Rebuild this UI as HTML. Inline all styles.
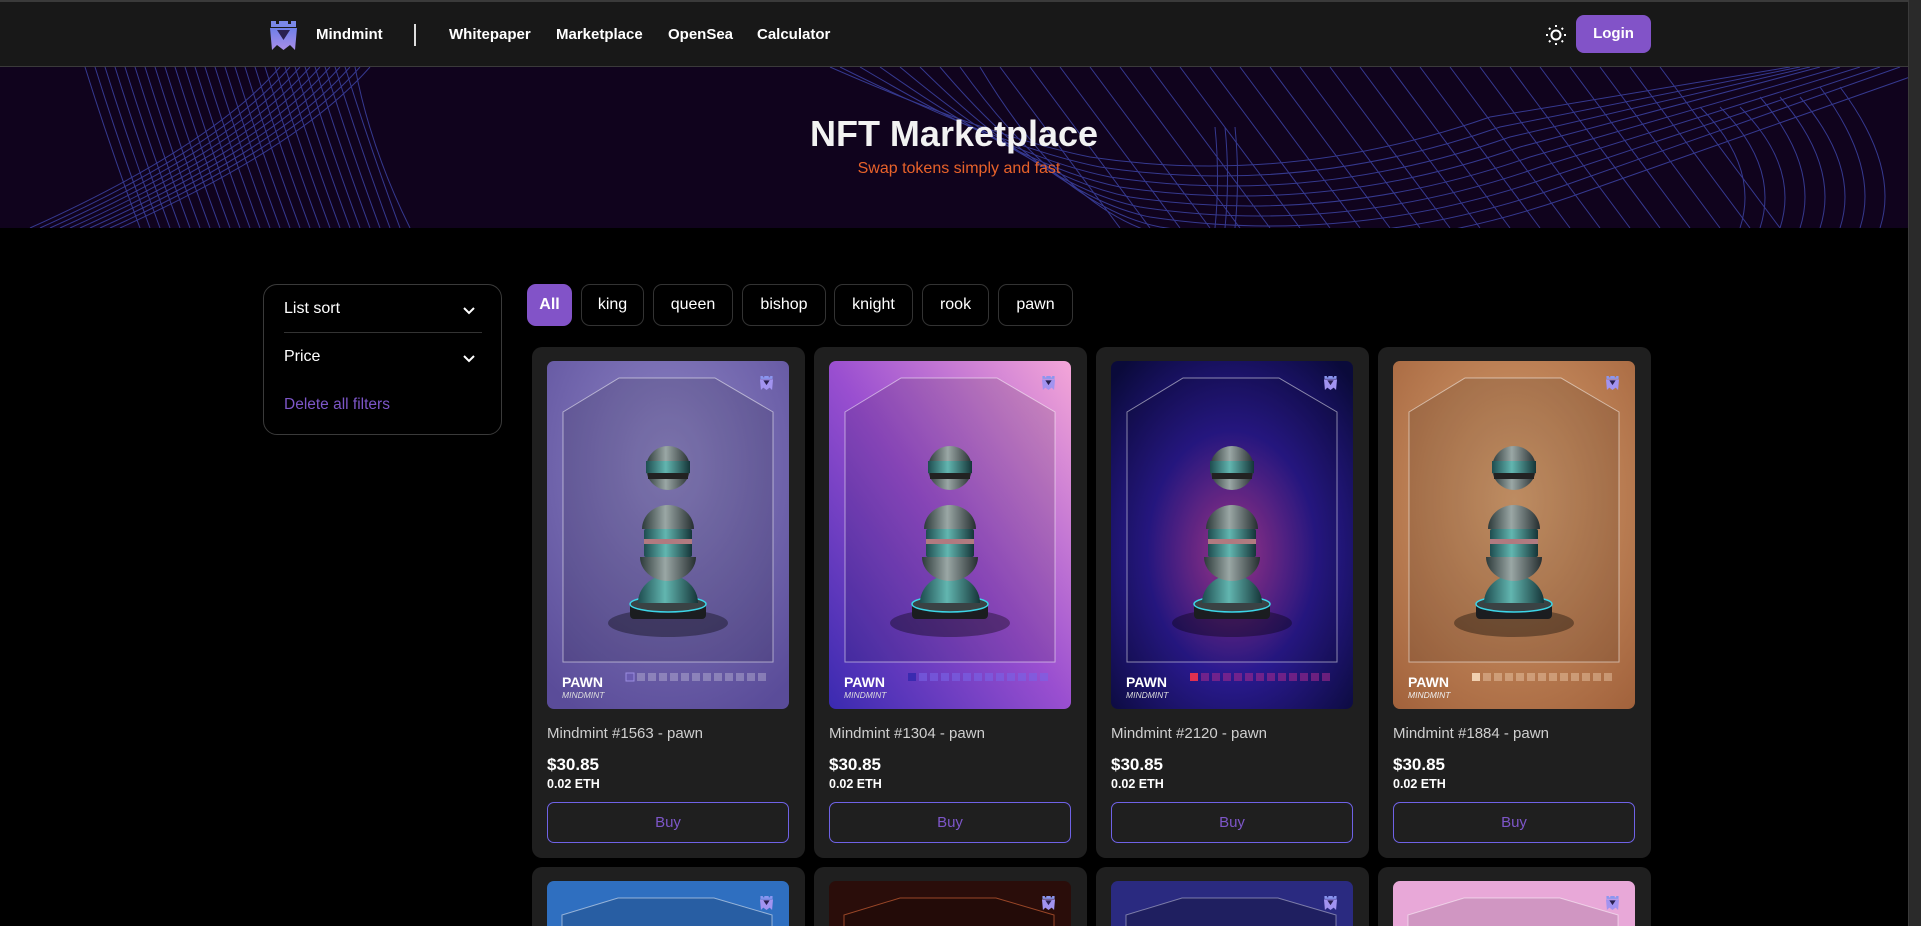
<!DOCTYPE html>
<html><head><meta charset="utf-8">
<style>
*{box-sizing:border-box;margin:0;padding:0}
html,body{width:1921px;height:926px;max-height:926px;overflow:hidden;background:#000;font-family:"Liberation Sans",sans-serif;color:#fff;position:relative}
.hdr{position:absolute;left:0;top:0;width:1908px;height:67px;background:#181818;border-top:2px solid #3a3a3a;border-bottom:1px solid #3a3a3a}
.hdr span{position:absolute;top:24px;font-size:15px;font-weight:bold;color:#fff}
.sb{position:absolute;right:0;top:0;width:13px;height:926px;background:#2a2a2a;border-left:1px solid #3a3a3a}
.hero{position:absolute;left:0;top:67px;width:1908px;height:161px;background:#10031d;overflow:hidden}
.side{position:absolute;left:263px;top:284px;width:239px;height:151px;border:1px solid #3a3a3a;border-radius:14px}
.side div{position:absolute;left:20px;font-size:16px}
.tab{position:absolute;top:284px;height:42px;border:1px solid #333;border-radius:9px;font-size:16px;text-align:center;line-height:40px;color:#fff;background:#000}
.card{position:absolute;width:273px;height:511px;background:#1f1f1f;border-radius:10px;overflow:hidden}
.card.s{height:59px;border-radius:10px 10px 0 0}
.card svg{position:absolute;left:15px;top:14px;border-radius:7px}
.nm{position:absolute;left:15px;top:378px;font-size:15px;color:#cfcfcf}
.pr{position:absolute;left:15px;top:408px;font-size:17px;font-weight:bold}
.eth{position:absolute;left:15px;top:430px;font-size:12.5px;font-weight:bold}
.buy{position:absolute;left:15px;top:455px;width:242px;height:41px;border:1px solid #6f62e6;border-radius:7px;text-align:center;line-height:39px;color:#7d56c8;font-size:15px}
</style></head><body>
<div class="hdr">
<svg style="position:absolute;left:268px;top:17px" width="31" height="31" viewBox="0 0 31 31"><defs><linearGradient id="lg" x1="0" y1="0" x2="0" y2="1"><stop offset="0" stop-color="#6f7fe8"/><stop offset="1" stop-color="#a98ee8"/></linearGradient></defs><path d="M3 2h5v3h3V2h9v3h3V2h5v6H3z" fill="#7a88e8"/><path d="M2 9h27l-2 22-5-5-6.5 5-6.5-5-5 5z" fill="url(#lg)"/><path d="M9 11h13l-6.5 10z" fill="#2a2050"/></svg>
<span style="left:316px">Mindmint</span>
<div style="position:absolute;left:414px;top:22px;width:2px;height:22px;background:#ddd"></div>
<span style="left:449px">Whitepaper</span>
<span style="left:556px">Marketplace</span>
<span style="left:668px">OpenSea</span>
<span style="left:757px">Calculator</span>
<svg style="position:absolute;left:1545px;top:22px" width="22" height="22" viewBox="0 0 22 22" fill="none" stroke="#fff" stroke-width="2"><circle cx="11" cy="11" r="4.5"/><path d="M11 1v2M11 19v2M1 11h2M19 11h2M4 4l1.4 1.4M16.6 16.6L18 18M4 18l1.4-1.4M16.6 5.4L18 4"/></svg>
<div style="position:absolute;left:1576px;top:13px;width:75px;height:38px;background:#8253c8;border-radius:8px;text-align:center;line-height:38px;font-weight:bold;font-size:15px">Login</div>
</div>
<div class="hero">
<svg width="1908" height="161" style="position:absolute;left:0;top:0" fill="none" stroke="#3a3f9c" stroke-width="1" opacity=".9">
<g>
<path d="M85 0 Q110 80 140 161M95 0 Q120 80 150 161M105 0 Q130 80 160 161M115 0 Q140 80 170 161M125 0 Q150 80 180 161M135 0 Q160 80 190 161M145 0 Q170 80 200 161M155 0 Q180 80 210 161M165 0 Q190 80 220 161M175 0 Q200 80 230 161M185 0 Q210 80 240 161M195 0 Q220 80 250 161M205 0 Q230 80 260 161M215 0 Q240 80 270 161M225 0 Q250 80 280 161M235 0 Q260 80 290 161M245 0 Q270 80 300 161M255 0 Q280 80 310 161M265 0 Q290 80 320 161M275 0 Q300 80 330 161M285 0 Q310 80 340 161M295 0 Q320 80 350 161M305 0 Q330 80 360 161M315 0 Q340 80 370 161M325 0 Q350 80 380 161M335 0 Q360 80 390 161M345 0 Q370 80 400 161M355 0 Q370 80 410 161"/>
<path d="M370 0 Q300 80 120 161M360 0 Q290 80 110 161M350 0 Q280 80 100 161M340 0 Q270 80 90 161M330 0 Q260 80 80 161M320 0 Q250 80 70 161M310 0 Q240 80 60 161M300 0 Q230 80 50 161M290 0 Q220 80 40 161M280 0 Q210 80 30 161"/>
<path d="M840 0 Q1000 80 1100 100 Q1300 130 1500 60 L1800 0"/>
<path d="M860 0 Q1010 90 1110 110 Q1310 140 1510 70 L1810 0"/>
<path d="M880 0 Q1020 100 1120 120 Q1320 150 1520 80 L1820 0"/>
<path d="M900 0 Q1030 110 1130 130 Q1330 160 1530 90 L1840 0"/>
<path d="M920 0 Q1040 120 1140 140 Q1340 170 1540 100 L1860 0"/>
<path d="M940 0 Q1050 130 1150 150 Q1350 180 1550 110 L1880 0"/>
<path d="M960 0 Q1060 140 1160 160 Q1360 190 1560 120 L1900 0"/>
<path d="M980 0 Q1070 150 1170 170 Q1370 200 1570 130 L1910 10"/>
<path d="M830 0 Q990 70 1090 90 Q1290 120 1490 50 L1790 0"/>
<path d="M1000 0 L1120 161M1030 0 L1150 161M1060 0 L1180 161M1090 0 L1210 161M1120 0 L1240 161M1150 0 L1270 161M1180 0 L1300 161M1210 0 L1330 161M1240 0 L1360 161M1270 0 L1390 161M1300 0 L1420 161M1330 0 L1450 161M1360 0 L1480 161M1390 0 L1510 161M1420 0 L1540 161M1450 0 L1570 161M1480 0 L1600 161M1510 0 L1630 161M1540 0 L1660 161M1570 0 L1690 161M1600 0 L1720 161M1630 0 L1750 161M1660 0 L1780 161"/>
<path d="M1215 60 Q1220 110 1215 161M1225 60 Q1230 110 1225 161M1235 60 Q1240 110 1235 161M1700 40 Q1760 100 1740 161M1720 40 Q1780 100 1760 161M1740 40 Q1800 100 1780 161M1760 30 Q1820 100 1800 161M1780 30 Q1840 100 1820 161M1800 30 Q1860 100 1840 161M1820 20 Q1880 100 1860 161M1840 20 Q1900 100 1880 161"/>
</g></svg>
<div style="position:absolute;left:0;width:1908px;top:46px;text-align:center;font-size:36px;font-weight:bold;color:#f2f2f2">NFT Marketplace</div>
<div style="position:absolute;left:0;width:1918px;top:93px;text-align:center;font-size:16px;color:#e8622a">Swap tokens simply and fast</div>
</div>
<div class="sb"></div>
<div class="side">
<div style="top:15px">List sort</div>
<svg style="position:absolute;left:198px;top:21px" width="14" height="10" viewBox="0 0 14 10" fill="none" stroke="#fff" stroke-width="2"><path d="M2 2l5 5 5-5"/></svg>
<div style="top:47px;width:198px;height:1px;background:#333"></div>
<div style="top:63px">Price</div>
<svg style="position:absolute;left:198px;top:69px" width="14" height="10" viewBox="0 0 14 10" fill="none" stroke="#fff" stroke-width="2"><path d="M2 2l5 5 5-5"/></svg>
<div style="top:111px;color:#7d56c8;font-size:15.5px">Delete all filters</div>
</div>
<div class="tab" style="left:527px;width:45px;background:#8253c8;border-color:#8253c8;font-weight:bold">All</div>
<div class="tab" style="left:581px;width:63px">king</div>
<div class="tab" style="left:653px;width:80px">queen</div>
<div class="tab" style="left:742px;width:84px">bishop</div>
<div class="tab" style="left:834px;width:79px">knight</div>
<div class="tab" style="left:922px;width:67px">rook</div>
<div class="tab" style="left:998px;width:75px">pawn</div>

<svg width="0" height="0" style="position:absolute">
<defs>
<linearGradient id="met" x1="0" y1="0" x2="1" y2="0"><stop offset="0" stop-color="#2d3a3a"/><stop offset=".45" stop-color="#9aa7a5"/><stop offset="1" stop-color="#262e30"/></linearGradient>
<linearGradient id="teal" x1="0" y1="0" x2="1" y2="0"><stop offset="0" stop-color="#1e4d50"/><stop offset=".45" stop-color="#62b6b0"/><stop offset="1" stop-color="#153538"/></linearGradient>
<symbol id="pawn" viewBox="0 0 240 348">
<polygon points="15,301 15,51 71,17 167,17 225,51 225,301" fill="rgba(0,0,0,.12)" stroke="rgba(255,255,255,.5)" stroke-width="1"/>
<ellipse cx="120" cy="262" rx="60" ry="14" fill="rgba(0,0,0,.35)"/>
<rect x="82" y="242" width="76" height="16" rx="4" fill="#1b1d20"/>
<ellipse cx="120" cy="243" rx="38" ry="8" fill="#3a4244" stroke="#3cd6e8" stroke-width="1.5"/>
<path d="M90 242 A30 28 0 0 1 150 242 Z" fill="url(#teal)"/>
<path d="M92 196 L148 196 A28 24 0 0 1 92 196 Z" fill="url(#met)"/>
<rect x="96" y="168" width="48" height="28" rx="2" fill="url(#teal)"/>
<rect x="96" y="178" width="48" height="5" fill="#b07a80"/>
<path d="M94 168 A26 24 0 0 1 146 168 Z" fill="url(#met)"/>
<circle cx="120" cy="107" r="22" fill="url(#met)"/>
<rect x="98" y="100" width="44" height="12" fill="url(#teal)"/>
<rect x="100" y="112" width="40" height="6" fill="#222"/>
</symbol>
<symbol id="logo" viewBox="0 0 31 31"><path d="M3 2h5v3h3V2h9v3h3V2h5v6H3z" fill="#8b96f0"/><path d="M2 9h27l-2 22-5-5-6.5 5-6.5-5-5 5z" fill="#a293f0"/><path d="M9 11h13l-6.5 10z" fill="#2a2050"/></symbol>
</defs></svg>

<div class="card" style="left:532px;top:347px">
<svg width="242" height="348" viewBox="0 0 242 348"><defs><radialGradient id="b1" cx=".5" cy=".3" r=".8"><stop offset="0" stop-color="#8d84c4"/><stop offset="1" stop-color="#5a4c99"/></radialGradient></defs><rect width="242" height="348" fill="url(#b1)"/><use href="#pawn" width="242" height="348"/><use href="#logo" x="212" y="14" width="15" height="15"/><text x="15" y="326" font-size="14" font-weight="bold" fill="#fff" font-family="Liberation Sans">PAWN</text><text x="15" y="337" font-size="8.5" font-style="italic" fill="#ddd" font-family="Liberation Sans">MINDMINT</text><g fill="rgba(255,255,255,.25)"><rect x="79" y="312" width="8" height="8" fill="#6a5bb0" stroke="#9a8ce0"/><rect x="90" y="312" width="8" height="8"/><rect x="101" y="312" width="8" height="8"/><rect x="112" y="312" width="8" height="8"/><rect x="123" y="312" width="8" height="8"/><rect x="134" y="312" width="8" height="8"/><rect x="145" y="312" width="8" height="8"/><rect x="156" y="312" width="8" height="8"/><rect x="167" y="312" width="8" height="8"/><rect x="178" y="312" width="8" height="8"/><rect x="189" y="312" width="8" height="8"/><rect x="200" y="312" width="8" height="8"/><rect x="211" y="312" width="8" height="8"/></g></svg>
<div class="nm">Mindmint #1563 - pawn</div><div class="pr">$30.85</div><div class="eth">0.02 ETH</div><div class="buy">Buy</div></div>

<div class="card" style="left:814px;top:347px">
<svg width="242" height="348" viewBox="0 0 242 348"><defs><linearGradient id="b2" x1="1" y1="0" x2="0" y2="1"><stop offset="0" stop-color="#f4a6d8"/><stop offset=".5" stop-color="#9a4fd0"/><stop offset="1" stop-color="#3a2ab0"/></linearGradient></defs><rect width="242" height="348" fill="url(#b2)"/><use href="#pawn" width="242" height="348"/><use href="#logo" x="212" y="14" width="15" height="15"/><text x="15" y="326" font-size="14" font-weight="bold" fill="#fff" font-family="Liberation Sans">PAWN</text><text x="15" y="337" font-size="8.5" font-style="italic" fill="#ddd" font-family="Liberation Sans">MINDMINT</text><g fill="rgba(120,100,230,.6)"><rect x="79" y="312" width="8" height="8" fill="#3a2ab0"/><rect x="90" y="312" width="8" height="8"/><rect x="101" y="312" width="8" height="8"/><rect x="112" y="312" width="8" height="8"/><rect x="123" y="312" width="8" height="8"/><rect x="134" y="312" width="8" height="8"/><rect x="145" y="312" width="8" height="8"/><rect x="156" y="312" width="8" height="8"/><rect x="167" y="312" width="8" height="8"/><rect x="178" y="312" width="8" height="8"/><rect x="189" y="312" width="8" height="8"/><rect x="200" y="312" width="8" height="8"/><rect x="211" y="312" width="8" height="8"/></g></svg>
<div class="nm">Mindmint #1304 - pawn</div><div class="pr">$30.85</div><div class="eth">0.02 ETH</div><div class="buy">Buy</div></div>

<div class="card" style="left:1096px;top:347px">
<svg width="242" height="348" viewBox="0 0 242 348"><defs><radialGradient id="b3" cx=".5" cy=".55" r=".7"><stop offset="0" stop-color="#b03a9a"/><stop offset=".5" stop-color="#2a1a90"/><stop offset="1" stop-color="#0a0a3a"/></radialGradient></defs><rect width="242" height="348" fill="url(#b3)"/><use href="#pawn" width="242" height="348"/><use href="#logo" x="212" y="14" width="15" height="15"/><text x="15" y="326" font-size="14" font-weight="bold" fill="#fff" font-family="Liberation Sans">PAWN</text><text x="15" y="337" font-size="8.5" font-style="italic" fill="#ddd" font-family="Liberation Sans">MINDMINT</text><g fill="rgba(160,40,140,.6)"><rect x="79" y="312" width="8" height="8" fill="#e03050"/><rect x="90" y="312" width="8" height="8"/><rect x="101" y="312" width="8" height="8"/><rect x="112" y="312" width="8" height="8"/><rect x="123" y="312" width="8" height="8"/><rect x="134" y="312" width="8" height="8"/><rect x="145" y="312" width="8" height="8"/><rect x="156" y="312" width="8" height="8"/><rect x="167" y="312" width="8" height="8"/><rect x="178" y="312" width="8" height="8"/><rect x="189" y="312" width="8" height="8"/><rect x="200" y="312" width="8" height="8"/><rect x="211" y="312" width="8" height="8"/></g></svg>
<div class="nm">Mindmint #2120 - pawn</div><div class="pr">$30.85</div><div class="eth">0.02 ETH</div><div class="buy">Buy</div></div>

<div class="card" style="left:1378px;top:347px">
<svg width="242" height="348" viewBox="0 0 242 348"><defs><radialGradient id="b4" cx=".5" cy=".4" r=".8"><stop offset="0" stop-color="#d8a070"/><stop offset="1" stop-color="#a0603a"/></radialGradient></defs><rect width="242" height="348" fill="url(#b4)"/><use href="#pawn" width="242" height="348"/><use href="#logo" x="212" y="14" width="15" height="15"/><text x="15" y="326" font-size="14" font-weight="bold" fill="#fff" font-family="Liberation Sans">PAWN</text><text x="15" y="337" font-size="8.5" font-style="italic" fill="#eee" font-family="Liberation Sans">MINDMINT</text><g fill="rgba(255,230,200,.35)"><rect x="79" y="312" width="8" height="8" fill="#f0d0b0"/><rect x="90" y="312" width="8" height="8"/><rect x="101" y="312" width="8" height="8"/><rect x="112" y="312" width="8" height="8"/><rect x="123" y="312" width="8" height="8"/><rect x="134" y="312" width="8" height="8"/><rect x="145" y="312" width="8" height="8"/><rect x="156" y="312" width="8" height="8"/><rect x="167" y="312" width="8" height="8"/><rect x="178" y="312" width="8" height="8"/><rect x="189" y="312" width="8" height="8"/><rect x="200" y="312" width="8" height="8"/><rect x="211" y="312" width="8" height="8"/></g></svg>
<div class="nm">Mindmint #1884 - pawn</div><div class="pr">$30.85</div><div class="eth">0.02 ETH</div><div class="buy">Buy</div></div>

<div class="card s" style="left:532px;top:867px"><svg width="242" height="60" viewBox="0 0 242 60"><rect width="242" height="60" fill="#2f6fc0"/><polygon points="15,60 15,34 71,17 167,17 225,34 225,60" fill="rgba(0,0,0,.15)" stroke="rgba(255,255,255,.5)"/><use href="#logo" x="212" y="14" width="15" height="15"/></svg></div>
<div class="card s" style="left:814px;top:867px"><svg width="242" height="60" viewBox="0 0 242 60"><rect width="242" height="60" fill="#2a0d0a"/><polygon points="15,60 15,34 71,17 167,17 225,34 225,60" fill="rgba(0,0,0,.15)" stroke="rgba(230,110,60,.6)"/><use href="#logo" x="212" y="14" width="15" height="15"/></svg></div>
<div class="card s" style="left:1096px;top:867px"><svg width="242" height="60" viewBox="0 0 242 60"><rect width="242" height="60" fill="#2a2a80"/><polygon points="15,60 15,34 71,17 167,17 225,34 225,60" fill="rgba(0,0,0,.25)" stroke="rgba(255,255,255,.4)"/><use href="#logo" x="212" y="14" width="15" height="15"/></svg></div>
<div class="card s" style="left:1378px;top:867px"><svg width="242" height="60" viewBox="0 0 242 60"><rect width="242" height="60" fill="#e8a8d8"/><polygon points="15,60 15,34 71,17 167,17 225,34 225,60" fill="rgba(0,0,0,.1)" stroke="rgba(255,255,255,.5)"/><use href="#logo" x="212" y="14" width="15" height="15"/></svg></div>
</body></html>
